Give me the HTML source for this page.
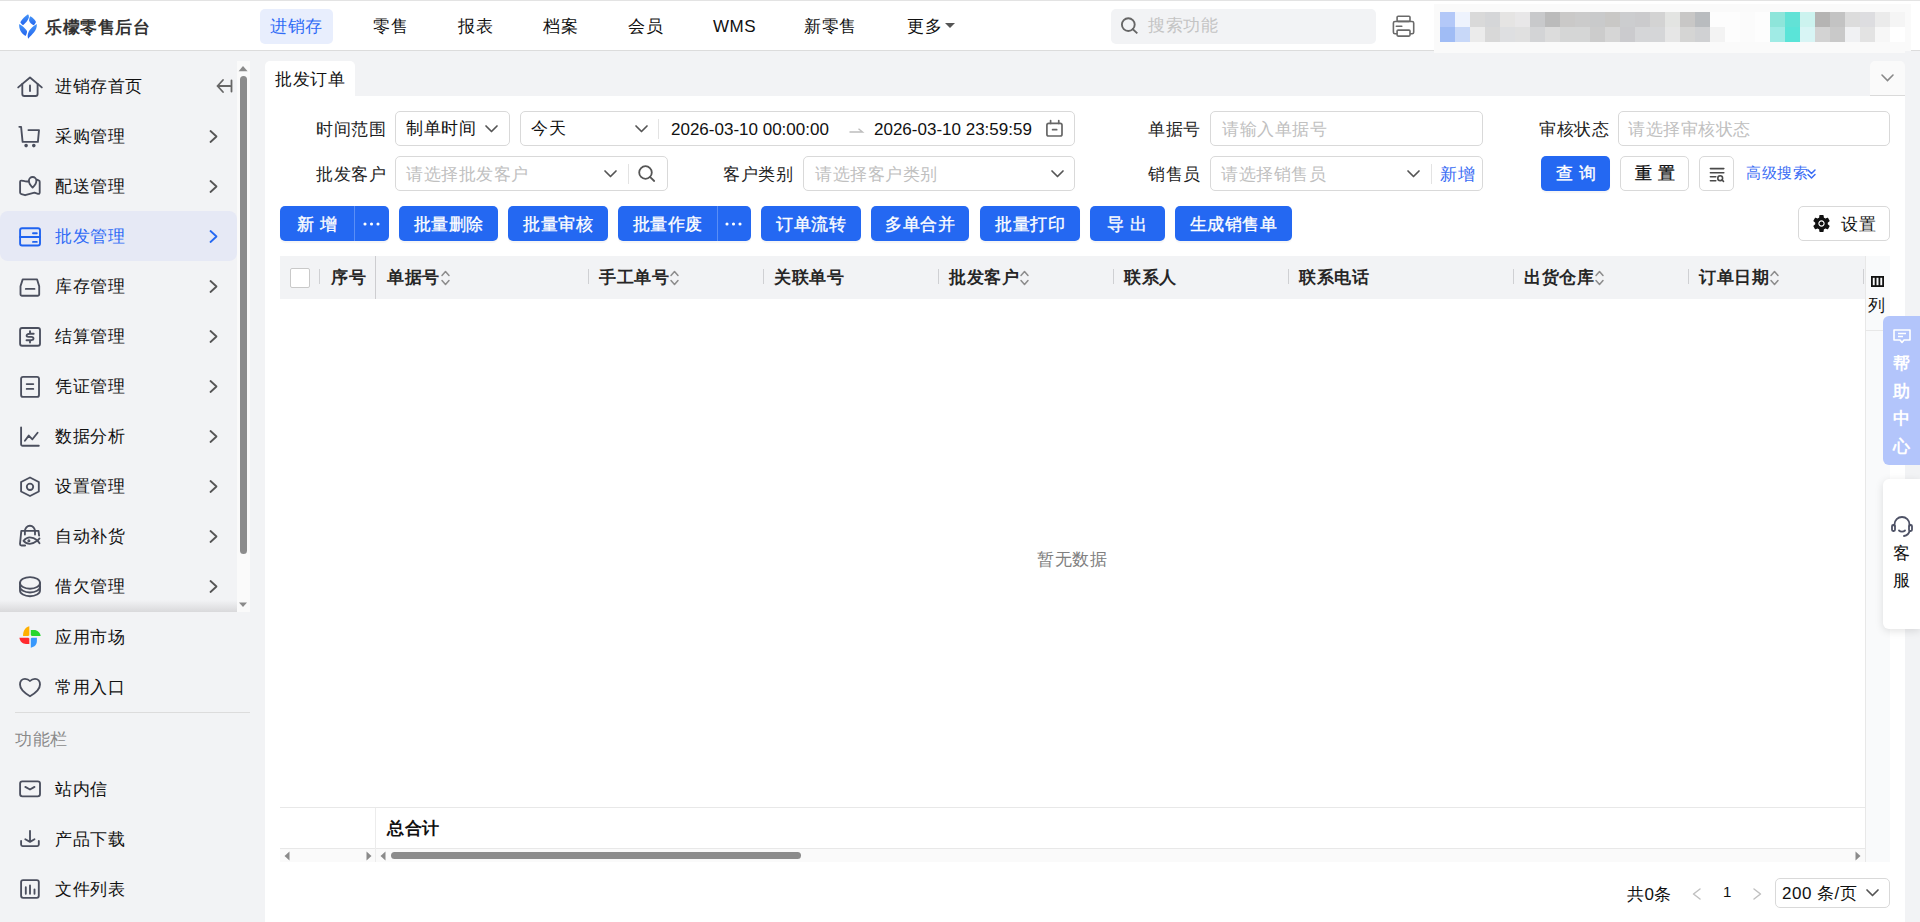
<!DOCTYPE html>
<html><head><meta charset="utf-8"><style>
*{box-sizing:border-box;margin:0;padding:0}
html,body{width:1920px;height:922px;overflow:hidden;background:#f2f3f5;font-family:"Liberation Sans",sans-serif;color:#1f1f1f}
.a{position:absolute}
.t{position:absolute;white-space:nowrap;font-size:17px;letter-spacing:0.5px;line-height:20px}
svg{position:absolute;overflow:visible}
.box{position:absolute;border:1px solid #d9d9d9;border-radius:5px;background:#fff}
.ph{color:#bfbfbf}
.btn{position:absolute;top:206px;height:35px;background:#2468f2;border-radius:5px;color:#fff;font-size:17.5px;line-height:35px;text-align:center;white-space:nowrap;box-shadow:0 2px 1px rgba(0,0,0,0.04)}
.th{font-weight:bold;color:#1f1f1f}
</style></head><body>
<div class="a" style="left:0px;top:0px;width:1920px;height:51px;background:#fff;border-top:1px solid #e3e3e3;border-bottom:1px solid #dcdcdc"></div>
<svg style="left:14px;top:10px;" width="28" height="32" viewBox="0 0 28 32"><defs><linearGradient id="lg" x1="0" y1="0" x2="0" y2="1"><stop offset="0" stop-color="#4595f8"/><stop offset="1" stop-color="#2364ee"/></linearGradient></defs><g fill="url(#lg)"><path d="M14 4.3 C11 6.5 7.5 9.5 6.3 12.3 C7 13.5 8 14.5 9 15.2 C11.5 13 14 10.5 14.8 7.8 C15 6.5 14.9 5 14 4.3 Z"/><path d="M16.3 6.2 C18.5 7.5 21 9.5 22 12 C21.3 13.5 20.5 14.5 19.5 15.3 C17.5 14 15.5 12.5 15.1 10.5 C15 9 15.5 7.2 16.3 6.2 Z"/><path d="M5.2 14 C4.8 18 6.5 23 11.5 26 C12.5 24.5 13.2 22.5 13 21 C11.5 18.5 8.5 16 5.2 14 Z"/><path d="M22.8 14 C23.3 21 18 24 14.2 28.7 C13.3 26.5 13.5 24 15 21 C16.5 18.5 19.5 16 22.8 14 Z"/></g></svg>
<div class="t" style="left:45px;top:17px;font-weight:900;color:#333;font-size:16.5px;letter-spacing:0.5px">乐檬零售后台</div>
<div class="a" style="left:260px;top:9px;width:73px;height:35px;border-radius:5px;background:#e8eefd"></div>
<div class="t" style="left:270px;top:17px;color:#2f6bf6">进销存</div>
<div class="t" style="left:373px;top:17px;color:#111">零售</div>
<div class="t" style="left:458px;top:17px;color:#111">报表</div>
<div class="t" style="left:543px;top:17px;color:#111">档案</div>
<div class="t" style="left:628px;top:17px;color:#111">会员</div>
<div class="t" style="left:713px;top:17px;color:#111">WMS</div>
<div class="t" style="left:804px;top:17px;color:#111">新零售</div>
<div class="t" style="left:907px;top:17px;color:#111">更多</div>
<svg style="left:945px;top:23px;" width="10" height="5" viewBox="0 0 10 5"><path d="M0 0 H10 L5 5Z" fill="#555"/></svg>
<div class="a" style="left:1111px;top:9px;width:265px;height:35px;border-radius:5px;background:#f2f3f5"></div>
<svg style="left:1121px;top:17px;" width="18" height="17" viewBox="0 0 18 17"><circle cx="7.3" cy="7.6" r="6.4" fill="none" stroke="#666" stroke-width="1.9"/><path d="M11.8 12.3 L15.6 15.7" stroke="#666" stroke-width="1.9" stroke-linecap="square"/></svg>
<div class="t" style="left:1148px;top:16px;color:#c4c4c4">搜索功能</div>
<svg style="left:1385px;top:8px;" width="40" height="36" viewBox="0 0 40 36"><g stroke="#6a6a6a" stroke-width="1.6" fill="none" stroke-linejoin="round"><rect x="12.1" y="8.2" width="12.9" height="5.2" rx="1"/><rect x="8.4" y="13.5" width="20.3" height="12.3" rx="1.6"/><rect x="12.1" y="22.1" width="12.9" height="6" rx="1" fill="#fff"/><path d="M11.3 18.2 H16.8" stroke-linecap="round"/></g></svg>
<div class="a" style="left:1434px;top:4px;width:477px;height:49px;background:#fafafa"></div>
<div class="a" style="left:1440px;top:12px;width:15px;height:15px;background:#b3c8f8"></div>
<div class="a" style="left:1440px;top:27px;width:15px;height:15px;background:#a0bcf5"></div>
<div class="a" style="left:1455px;top:12px;width:15px;height:15px;background:#eef3fd"></div>
<div class="a" style="left:1455px;top:27px;width:15px;height:15px;background:#c8d8f8"></div>
<div class="a" style="left:1470px;top:12px;width:15px;height:15px;background:#d9d9d9"></div>
<div class="a" style="left:1470px;top:27px;width:15px;height:15px;background:#ebebeb"></div>
<div class="a" style="left:1485px;top:12px;width:15px;height:15px;background:#d5d6d8"></div>
<div class="a" style="left:1485px;top:27px;width:15px;height:15px;background:#d8d8d8"></div>
<div class="a" style="left:1500px;top:12px;width:15px;height:15px;background:#e5e4e3"></div>
<div class="a" style="left:1500px;top:27px;width:15px;height:15px;background:#dedfe1"></div>
<div class="a" style="left:1515px;top:12px;width:15px;height:15px;background:#e8e7e8"></div>
<div class="a" style="left:1515px;top:27px;width:15px;height:15px;background:#e0e0e0"></div>
<div class="a" style="left:1530px;top:12px;width:15px;height:15px;background:#c8c9cb"></div>
<div class="a" style="left:1530px;top:27px;width:15px;height:15px;background:#d3d4d6"></div>
<div class="a" style="left:1545px;top:12px;width:15px;height:15px;background:#bbbbbb"></div>
<div class="a" style="left:1545px;top:27px;width:15px;height:15px;background:#dcdcdc"></div>
<div class="a" style="left:1560px;top:12px;width:15px;height:15px;background:#cac9c8"></div>
<div class="a" style="left:1560px;top:27px;width:15px;height:15px;background:#d5d6d6"></div>
<div class="a" style="left:1575px;top:12px;width:15px;height:15px;background:#cbcbcb"></div>
<div class="a" style="left:1575px;top:27px;width:15px;height:15px;background:#d5d6d6"></div>
<div class="a" style="left:1590px;top:12px;width:15px;height:15px;background:#c9cacb"></div>
<div class="a" style="left:1590px;top:27px;width:15px;height:15px;background:#cccccc"></div>
<div class="a" style="left:1605px;top:12px;width:15px;height:15px;background:#c9c8c6"></div>
<div class="a" style="left:1605px;top:27px;width:15px;height:15px;background:#d6d6d6"></div>
<div class="a" style="left:1620px;top:12px;width:15px;height:15px;background:#cccdcf"></div>
<div class="a" style="left:1620px;top:27px;width:15px;height:15px;background:#cbcbce"></div>
<div class="a" style="left:1635px;top:12px;width:15px;height:15px;background:#cbcbcd"></div>
<div class="a" style="left:1635px;top:27px;width:15px;height:15px;background:#d5d6d8"></div>
<div class="a" style="left:1650px;top:12px;width:15px;height:15px;background:#d3d3d3"></div>
<div class="a" style="left:1650px;top:27px;width:15px;height:15px;background:#d5d6d8"></div>
<div class="a" style="left:1665px;top:12px;width:15px;height:15px;background:#e3e4e2"></div>
<div class="a" style="left:1665px;top:27px;width:15px;height:15px;background:#e6e6e6"></div>
<div class="a" style="left:1680px;top:12px;width:15px;height:15px;background:#c8c7c6"></div>
<div class="a" style="left:1680px;top:27px;width:15px;height:15px;background:#d5d5d4"></div>
<div class="a" style="left:1695px;top:12px;width:15px;height:15px;background:#b9bcbf"></div>
<div class="a" style="left:1695px;top:27px;width:15px;height:15px;background:#d0d1d3"></div>
<div class="a" style="left:1710px;top:12px;width:15px;height:15px;background:#fdfdfd"></div>
<div class="a" style="left:1710px;top:27px;width:15px;height:15px;background:#f3f3f3"></div>
<div class="a" style="left:1725px;top:12px;width:15px;height:15px;background:#fdfdfd"></div>
<div class="a" style="left:1725px;top:27px;width:15px;height:15px;background:#fdfdfd"></div>
<div class="a" style="left:1740px;top:12px;width:15px;height:15px;background:#fbfbfb"></div>
<div class="a" style="left:1740px;top:27px;width:15px;height:15px;background:#fbfbfb"></div>
<div class="a" style="left:1755px;top:12px;width:15px;height:15px;background:#fdfdfd"></div>
<div class="a" style="left:1755px;top:27px;width:15px;height:15px;background:#fdfdfd"></div>
<div class="a" style="left:1770px;top:12px;width:15px;height:15px;background:#8ee5da"></div>
<div class="a" style="left:1770px;top:27px;width:15px;height:15px;background:#a0ebe5"></div>
<div class="a" style="left:1785px;top:12px;width:15px;height:15px;background:#62e2d6"></div>
<div class="a" style="left:1785px;top:27px;width:15px;height:15px;background:#5ae4d8"></div>
<div class="a" style="left:1800px;top:12px;width:15px;height:15px;background:#ccf3ef"></div>
<div class="a" style="left:1800px;top:27px;width:15px;height:15px;background:#d8f5f5"></div>
<div class="a" style="left:1815px;top:12px;width:15px;height:15px;background:#b5b4b3"></div>
<div class="a" style="left:1815px;top:27px;width:15px;height:15px;background:#d3d3d3"></div>
<div class="a" style="left:1830px;top:12px;width:15px;height:15px;background:#c3c3c3"></div>
<div class="a" style="left:1830px;top:27px;width:15px;height:15px;background:#c9c9c9"></div>
<div class="a" style="left:1845px;top:12px;width:15px;height:15px;background:#dcdcdc"></div>
<div class="a" style="left:1845px;top:27px;width:15px;height:15px;background:#f0f1f3"></div>
<div class="a" style="left:1860px;top:12px;width:15px;height:15px;background:#dddde0"></div>
<div class="a" style="left:1860px;top:27px;width:15px;height:15px;background:#e3e3e3"></div>
<div class="a" style="left:1875px;top:12px;width:15px;height:15px;background:#ebebeb"></div>
<div class="a" style="left:1875px;top:27px;width:15px;height:15px;background:#f7f7f7"></div>
<div class="a" style="left:1890px;top:12px;width:15px;height:15px;background:#f5f5f5"></div>
<div class="a" style="left:1890px;top:27px;width:15px;height:15px;background:#ffffff"></div>
<div class="a" style="left:0px;top:211px;width:237px;height:50px;border-radius:8px;background:#e6e9f5"></div>
<svg style="left:14px;top:70px;" width="32" height="32" viewBox="0 0 32 32"><g fill="none" stroke="#4b4f5e" stroke-width="1.85" stroke-linecap="round" stroke-linejoin="round"><path d="M4.2 17.4 L16 7.5 L27.8 17.4"/><path d="M8.3 13.8 V24 A2 2 0 0 0 10.3 26 H21.6 A2 2 0 0 0 23.6 24 V13.8"/><path d="M16 15.4 V21"/></g></svg>
<div class="t" style="left:55px;top:77px;color:#111">进销存首页</div>
<svg style="left:216px;top:79px;" width="17" height="14" viewBox="0 0 17 14"><g fill="none" stroke="#666" stroke-width="1.8" stroke-linecap="round" stroke-linejoin="round"><path d="M7 1 L1.5 7 L7 13 M1.5 7 H14 M15.5 1.5 V12.5"/></g></svg>
<svg style="left:14px;top:120px;" width="32" height="32" viewBox="0 0 32 32"><g fill="none" stroke="#4b4f5e" stroke-width="1.85" stroke-linecap="round" stroke-linejoin="round"><path d="M5.3 6.8 H7.1 L8.6 21.9 H23.9 L25 10.1 H14.4"/><circle cx="12.1" cy="25.6" r="0.9" fill="#4b4f5e"/><circle cx="19.8" cy="25.6" r="0.9" fill="#4b4f5e"/></g></svg>
<div class="t" style="left:55px;top:127px;color:#111">采购管理</div>
<svg style="left:209px;top:130px;" width="9" height="13" viewBox="0 0 9 13"><path d="M1.5 1 L7.5 6.5 L1.5 12" fill="none" stroke="#555" stroke-width="1.8" stroke-linecap="round" stroke-linejoin="round"/></svg>
<svg style="left:14px;top:170px;" width="32" height="32" viewBox="0 0 32 32"><g fill="none" stroke="#4b4f5e" stroke-width="1.85" stroke-linecap="round" stroke-linejoin="round"><path d="M14.6 11.3 C12.5 12 10 11 8 10.6 C7 10.4 6.1 11 6.1 12 V22.6 C6.1 23.4 6.6 24 7.4 24.2 L11.1 25.2 L20.5 22.7 L24 23.8 C25 24.1 25.7 23.5 25.7 22.6 V11.8 C25.7 11.1 25.3 10.6 24.6 10.4 L22.8 9.7"/><path d="M18.6 17.6 C16.5 15.5 14.9 13.5 14.9 10.7 A3.7 3.7 0 0 1 22.4 10.7 C22.4 13.5 20.7 15.5 18.6 17.6 Z"/></g></svg>
<div class="t" style="left:55px;top:177px;color:#111">配送管理</div>
<svg style="left:209px;top:180px;" width="9" height="13" viewBox="0 0 9 13"><path d="M1.5 1 L7.5 6.5 L1.5 12" fill="none" stroke="#555" stroke-width="1.8" stroke-linecap="round" stroke-linejoin="round"/></svg>
<svg style="left:14px;top:220px;" width="32" height="32" viewBox="0 0 32 32"><g fill="none" stroke="#1f63f0" stroke-width="1.9" stroke-linecap="round" stroke-linejoin="round"><rect x="6.1" y="8.2" width="19.9" height="17.3" rx="2"/><path d="M6.1 17 H26"/><path d="M19 13.2 H22.8 M19 21.9 H22.8"/></g></svg>
<div class="t" style="left:55px;top:227px;color:#2f6bf6">批发管理</div>
<svg style="left:209px;top:230px;" width="9" height="13" viewBox="0 0 9 13"><path d="M1.5 1 L7.5 6.5 L1.5 12" fill="none" stroke="#2468f2" stroke-width="1.8" stroke-linecap="round" stroke-linejoin="round"/></svg>
<svg style="left:14px;top:270px;" width="32" height="32" viewBox="0 0 32 32"><g fill="none" stroke="#4b4f5e" stroke-width="1.85" stroke-linecap="round" stroke-linejoin="round"><path d="M8.7 9.4 H23.1 L25.2 16.2 V24.2 A1.5 1.5 0 0 1 23.7 25.7 H8 A1.5 1.5 0 0 1 6.5 24.2 V16.2 Z"/><path d="M11.8 18.9 H20.5"/></g></svg>
<div class="t" style="left:55px;top:277px;color:#111">库存管理</div>
<svg style="left:209px;top:280px;" width="9" height="13" viewBox="0 0 9 13"><path d="M1.5 1 L7.5 6.5 L1.5 12" fill="none" stroke="#555" stroke-width="1.8" stroke-linecap="round" stroke-linejoin="round"/></svg>
<svg style="left:14px;top:320px;" width="32" height="32" viewBox="0 0 32 32"><g fill="none" stroke="#4b4f5e" stroke-width="1.85" stroke-linecap="round" stroke-linejoin="round"><rect x="6.1" y="8" width="19.9" height="17.7" rx="2"/><path d="M19.7 13.7 H16 C13.8 13.7 12.6 14.6 12.6 15.6 C12.6 16.5 13.4 16.9 14.5 16.9 H17.4 C18.7 16.9 19.5 17.6 19.5 18.6 C19.5 19.6 18.5 20.2 17 20.2 H12.5 M16 11.1 V13.5 M16 20.4 V22.6"/></g></svg>
<div class="t" style="left:55px;top:327px;color:#111">结算管理</div>
<svg style="left:209px;top:330px;" width="9" height="13" viewBox="0 0 9 13"><path d="M1.5 1 L7.5 6.5 L1.5 12" fill="none" stroke="#555" stroke-width="1.8" stroke-linecap="round" stroke-linejoin="round"/></svg>
<svg style="left:14px;top:370px;" width="32" height="32" viewBox="0 0 32 32"><g fill="none" stroke="#4b4f5e" stroke-width="1.85" stroke-linecap="round" stroke-linejoin="round"><rect x="7.1" y="6.8" width="17.9" height="20.1" rx="2"/><path d="M12.7 14.1 H19.3 M12.7 18.9 H19.3"/></g></svg>
<div class="t" style="left:55px;top:377px;color:#111">凭证管理</div>
<svg style="left:209px;top:380px;" width="9" height="13" viewBox="0 0 9 13"><path d="M1.5 1 L7.5 6.5 L1.5 12" fill="none" stroke="#555" stroke-width="1.8" stroke-linecap="round" stroke-linejoin="round"/></svg>
<svg style="left:14px;top:420px;" width="32" height="32" viewBox="0 0 32 32"><g fill="none" stroke="#4b4f5e" stroke-width="1.85" stroke-linecap="round" stroke-linejoin="round"><path d="M7.1 7.5 V24.2 A1.5 1.5 0 0 0 8.6 25.7 H24.8"/><path d="M10.9 20.8 L14.75 15.6 L18.4 19.3 L23.6 12.7"/></g></svg>
<div class="t" style="left:55px;top:427px;color:#111">数据分析</div>
<svg style="left:209px;top:430px;" width="9" height="13" viewBox="0 0 9 13"><path d="M1.5 1 L7.5 6.5 L1.5 12" fill="none" stroke="#555" stroke-width="1.8" stroke-linecap="round" stroke-linejoin="round"/></svg>
<svg style="left:14px;top:470px;" width="32" height="32" viewBox="0 0 32 32"><g fill="none" stroke="#4b4f5e" stroke-width="1.85" stroke-linecap="round" stroke-linejoin="round"><path d="M16 7.5 L24.8 12 V21.5 L16 26 L7.1 21.5 V12 Z"/><circle cx="16" cy="16.8" r="3.2"/></g></svg>
<div class="t" style="left:55px;top:477px;color:#111">设置管理</div>
<svg style="left:209px;top:480px;" width="9" height="13" viewBox="0 0 9 13"><path d="M1.5 1 L7.5 6.5 L1.5 12" fill="none" stroke="#555" stroke-width="1.8" stroke-linecap="round" stroke-linejoin="round"/></svg>
<svg style="left:14px;top:520px;" width="32" height="32" viewBox="0 0 32 32"><g fill="none" stroke="#4b4f5e" stroke-width="1.85" stroke-linecap="round" stroke-linejoin="round"><path d="M10.9 14.6 V11.5 A5.05 5.8 0 0 1 21 11.5 V14.6"/><path d="M11.1 25.5 H7.5 A1.5 1.5 0 0 1 6 24 L7.3 10.8 H24.5 L25.1 15.6"/><path d="M9.5 20.8 C11.5 18.5 13.5 17.4 15.8 17.4 C18.5 17.4 21 18.6 23.6 20.6 C21 22.6 18.5 23.8 15.8 23.8 C13.5 23.8 11.5 23 9.5 20.8 Z M23.6 20.6 L25.5 18.4 M23.6 20.6 L25.5 23.3"/><circle cx="14.9" cy="20.8" r="0.6" fill="#4b4f5e"/></g></svg>
<div class="t" style="left:55px;top:527px;color:#111">自动补货</div>
<svg style="left:209px;top:530px;" width="9" height="13" viewBox="0 0 9 13"><path d="M1.5 1 L7.5 6.5 L1.5 12" fill="none" stroke="#555" stroke-width="1.8" stroke-linecap="round" stroke-linejoin="round"/></svg>
<svg style="left:14px;top:570px;" width="32" height="32" viewBox="0 0 32 32"><g fill="none" stroke="#4b4f5e" stroke-width="1.85" stroke-linecap="round" stroke-linejoin="round"><ellipse cx="16" cy="12.9" rx="10" ry="5.8"/><path d="M6 13 V16.7 A10 5.8 0 0 0 26 16.7 V13"/><path d="M6 16.7 V20.4 A10 5.8 0 0 0 26 20.4 V16.7"/></g></svg>
<div class="t" style="left:55px;top:577px;color:#111">借欠管理</div>
<svg style="left:209px;top:580px;" width="9" height="13" viewBox="0 0 9 13"><path d="M1.5 1 L7.5 6.5 L1.5 12" fill="none" stroke="#555" stroke-width="1.8" stroke-linecap="round" stroke-linejoin="round"/></svg>
<div class="a" style="left:237px;top:61px;width:13px;height:551px;background:#fafafa"></div>
<svg style="left:238px;top:66px;" width="10" height="6" viewBox="0 0 10 6"><path d="M0.6 5.2 L5 0 L9.6 5.2Z" fill="#8a8a8a"/></svg>
<div class="a" style="left:240px;top:76px;width:7px;height:478px;border-radius:3.5px;background:#8c8c8c"></div>
<svg style="left:238px;top:602px;" width="10" height="6" viewBox="0 0 10 6"><path d="M1 0.5 L5 5 L9 0.5Z" fill="#8a8a8a"/></svg>
<div class="a" style="left:0px;top:600px;width:237px;height:12px;background:linear-gradient(#f2f3f5,#d9d9db)"></div>
<svg style="left:14px;top:621px;" width="32" height="32" viewBox="0 0 32 32"><path d="M15.3 5.2 V14.2 L14.3 15 H9 C9 10 11 6.3 15.3 5.2 Z" fill="#ffb000"/><path d="M16.8 9 H20 C23.5 9 26 11.5 26.7 14.9 H17.7 L16.8 14 Z" fill="#28d62f"/><path d="M5.4 16.7 H14.3 L15.3 17.6 V22.9 H12 C8.5 22.9 6 20.5 5.4 16.7 Z" fill="#ff2a2e"/><path d="M16.8 26.7 V17.6 L17.7 16.7 H22.9 V20 C22.9 23.5 20.5 26 16.8 26.7 Z" fill="#3898fc"/></svg>
<div class="t" style="left:55px;top:628px;color:#111">应用市场</div>
<svg style="left:14px;top:671px;" width="32" height="32" viewBox="0 0 32 32"><g fill="none" stroke="#4b4f5e" stroke-width="1.85" stroke-linecap="round" stroke-linejoin="round"><path d="M16 10 C14.5 8.3 12.8 7.8 11 7.8 C8 7.8 6 10.3 6 13.5 C6 18 10.5 22 16 25.2 C21.5 22 26 18 26 13.5 C26 10.3 24 7.8 21 7.8 C19.2 7.8 17.5 8.3 16 10 Z"/></g></svg>
<div class="t" style="left:55px;top:678px;color:#111">常用入口</div>
<div class="a" style="left:15px;top:712px;width:235px;height:1px;background:#dcdcdc"></div>
<div class="t" style="left:15px;top:730px;color:#8a8a8a">功能栏</div>
<svg style="left:14px;top:773px;" width="32" height="32" viewBox="0 0 32 32"><g fill="none" stroke="#4b4f5e" stroke-width="1.85" stroke-linecap="round" stroke-linejoin="round"><rect x="6.1" y="8.3" width="19.9" height="15" rx="2.3"/><path d="M11.3 13.9 L16 16.5 L20.5 13.9"/></g></svg>
<div class="t" style="left:55px;top:780px;color:#111">站内信</div>
<svg style="left:14px;top:823px;" width="32" height="32" viewBox="0 0 32 32"><g fill="none" stroke="#4b4f5e" stroke-width="1.85" stroke-linecap="round" stroke-linejoin="round"><path d="M16 7.8 V18.9 M11.3 16.3 L16 18.9 L20.5 16.3"/><path d="M7.1 18 V21.6 A1.5 1.5 0 0 0 8.6 23.1 H23.3 A1.5 1.5 0 0 0 24.8 21.6 V18"/></g></svg>
<div class="t" style="left:55px;top:830px;color:#111">产品下载</div>
<svg style="left:14px;top:873px;" width="32" height="32" viewBox="0 0 32 32"><g fill="none" stroke="#4b4f5e" stroke-width="1.85" stroke-linecap="round" stroke-linejoin="round"><rect x="7.1" y="7.1" width="17.7" height="17.7" rx="2"/><path d="M11.8 14.2 V20.8 M16 12.5 V20.8 M20.5 16.3 V20.8"/></g></svg>
<div class="t" style="left:55px;top:880px;color:#111">文件列表</div>
<div class="a" style="left:265px;top:61px;width:90px;height:40px;border-radius:5px 5px 0 0;background:#fff"></div>
<div class="t" style="left:275px;top:70px;color:#111">批发订单</div>
<div class="a" style="left:1870px;top:61px;width:35px;height:35px;border-radius:5px 5px 0 0;background:#fafafa;border-bottom:1px solid #dadada"></div>
<svg style="left:1881px;top:74px;" width="13" height="8" viewBox="0 0 13 8"><path d="M1 1 L6.5 6.5 L12 1" fill="none" stroke="#888" stroke-width="1.6" stroke-linecap="round"/></svg>
<div class="a" style="left:265px;top:96px;width:1640px;height:826px;background:#fff"></div>
<div class="t" style="left:316px;top:120px;color:#222">时间范围</div>
<div class="a" style="left:395px;top:111px;width:115px;height:35px;border:1px solid #d9d9d9;border-radius:5px;background:#fff;"></div>
<div class="t" style="left:406px;top:119px;color:#111">制单时间</div>
<svg style="left:485px;top:125px;" width="13" height="8" viewBox="0 0 13 8"><path d="M1 1 L6.5 6.5 L12 1" fill="none" stroke="#555" stroke-width="1.7" stroke-linecap="round" stroke-linejoin="round"/></svg>
<div class="a" style="left:520px;top:111px;width:555px;height:35px;border:1px solid #d9d9d9;border-radius:5px;background:#fff;"></div>
<div class="t" style="left:531px;top:119px;color:#111">今天</div>
<svg style="left:635px;top:125px;" width="13" height="8" viewBox="0 0 13 8"><path d="M1 1 L6.5 6.5 L12 1" fill="none" stroke="#555" stroke-width="1.7" stroke-linecap="round" stroke-linejoin="round"/></svg>
<div class="a" style="left:658px;top:119px;width:1px;height:20px;background:#e3e3e3"></div>
<div class="t" style="left:671px;top:120px;color:#111;font-size:17px;letter-spacing:0">2026-03-10 00:00:00</div>
<svg style="left:849px;top:128px;" width="14" height="5" viewBox="0 0 14 5"><path d="M0.5 4 H13.5 L9.5 0.8" fill="none" stroke="#bdbdbd" stroke-width="1.4"/></svg>
<div class="t" style="left:874px;top:120px;color:#111;font-size:17px;letter-spacing:0">2026-03-10 23:59:59</div>
<svg style="left:1040px;top:112px;" width="30" height="32" viewBox="0 0 30 32"><g fill="none" stroke="#666" stroke-width="1.7" stroke-linejoin="round" stroke-linecap="round"><rect x="6.9" y="11.4" width="15.1" height="12.6" rx="1.8"/><path d="M10.6 8.6 V11.4 M18.75 8.6 V11.4"/><path d="M12.6 17.7 H16.7"/></g></svg>
<div class="t" style="left:1148px;top:120px;color:#222">单据号</div>
<div class="a" style="left:1210px;top:111px;width:273px;height:35px;border:1px solid #d9d9d9;border-radius:5px;background:#fff;"></div>
<div class="t" style="left:1222px;top:120px;color:#c0c0c0">请输入单据号</div>
<div class="t" style="left:1539px;top:120px;color:#222">审核状态</div>
<div class="a" style="left:1618px;top:111px;width:272px;height:35px;border:1px solid #d9d9d9;border-radius:5px;background:#fff;"></div>
<div class="t" style="left:1628px;top:120px;color:#c0c0c0">请选择审核状态</div>
<div class="t" style="left:316px;top:165px;color:#222">批发客户</div>
<div class="a" style="left:395px;top:156px;width:273px;height:35px;border:1px solid #d9d9d9;border-radius:5px;background:#fff;"></div>
<div class="t" style="left:406px;top:165px;color:#c0c0c0">请选择批发客户</div>
<svg style="left:604px;top:170px;" width="13" height="8" viewBox="0 0 13 8"><path d="M1 1 L6.5 6.5 L12 1" fill="none" stroke="#555" stroke-width="1.7" stroke-linecap="round" stroke-linejoin="round"/></svg>
<div class="a" style="left:628px;top:164px;width:1px;height:20px;background:#e3e3e3"></div>
<svg style="left:638px;top:165px;" width="18" height="17" viewBox="0 0 18 17"><circle cx="7.5" cy="7.5" r="6.3" fill="none" stroke="#555" stroke-width="1.8"/><path d="M12.2 12.2 L16.2 16" stroke="#555" stroke-width="1.8" stroke-linecap="round"/></svg>
<div class="t" style="left:723px;top:165px;color:#222">客户类别</div>
<div class="a" style="left:803px;top:156px;width:272px;height:35px;border:1px solid #d9d9d9;border-radius:5px;background:#fff;"></div>
<div class="t" style="left:815px;top:165px;color:#c0c0c0">请选择客户类别</div>
<svg style="left:1051px;top:170px;" width="13" height="8" viewBox="0 0 13 8"><path d="M1 1 L6.5 6.5 L12 1" fill="none" stroke="#555" stroke-width="1.7" stroke-linecap="round" stroke-linejoin="round"/></svg>
<div class="t" style="left:1148px;top:165px;color:#222">销售员</div>
<div class="a" style="left:1210px;top:156px;width:273px;height:35px;border:1px solid #d9d9d9;border-radius:5px;background:#fff;"></div>
<div class="t" style="left:1221px;top:165px;color:#c0c0c0">请选择销售员</div>
<svg style="left:1407px;top:170px;" width="13" height="8" viewBox="0 0 13 8"><path d="M1 1 L6.5 6.5 L12 1" fill="none" stroke="#555" stroke-width="1.7" stroke-linecap="round" stroke-linejoin="round"/></svg>
<div class="a" style="left:1431px;top:164px;width:1px;height:20px;background:#e3e3e3"></div>
<div class="t" style="left:1440px;top:165px;color:#3a6cf4">新增</div>
<div class="a" style="left:1541px;top:156px;width:69px;height:35px;background:#2468f2;border-radius:5px;box-shadow:0 2px 1px rgba(0,0,0,0.04)"></div>
<div class="t" style="left:1556px;top:164px;color:#fff;-webkit-text-stroke:0.35px #fff">查 询</div>
<div class="a" style="left:1620px;top:156px;width:69px;height:35px;border:1px solid #d9d9d9;border-radius:5px;background:#fff;"></div>
<div class="t" style="left:1635px;top:164px;color:#111;-webkit-text-stroke:0.35px #111">重 置</div>
<div class="a" style="left:1699px;top:156px;width:35px;height:35px;border:1px solid #d9d9d9;border-radius:5px;background:#fff;"></div>
<svg style="left:1700px;top:160px;" width="40" height="30" viewBox="0 0 40 30"><g fill="none" stroke="#4a4a4a" stroke-width="1.6" stroke-linecap="round"><path d="M10.4 8.6 H23.8 M10.4 12.7 H23.8 M10.4 16.8 H15.8 M10.4 20.7 H15.8"/><circle cx="20.2" cy="18.2" r="2.4"/><path d="M22 20 L23.5 21.4"/></g></svg>
<div class="t" style="left:1746px;top:163px;color:#3a6cf4;font-size:15px">高级搜索</div>
<svg style="left:1807px;top:169px;" width="9" height="10" viewBox="0 0 9 10"><path d="M1 1 L4.5 4.5 L8 1 M1 5.5 L4.5 9 L8 5.5" fill="none" stroke="#3a6cf4" stroke-width="1.5" stroke-linecap="round" stroke-linejoin="round"/></svg>
<div class="a" style="left:280px;top:206px;width:109px;height:35px;background:#2468f2;border-radius:5px;box-shadow:0 2px 1px rgba(0,0,0,0.04)"></div>
<div class="t" style="left:280px;top:215px;width:74px;text-align:center;color:#fff;-webkit-text-stroke:0.35px #fff">新 增</div>
<div class="a" style="left:354px;top:206px;width:1px;height:35px;background:#5a8ef6"></div>
<svg style="left:363px;top:222px;" width="17" height="4" viewBox="0 0 17 4"><circle cx="2" cy="2" r="1.55" fill="#fff"/><circle cx="8.5" cy="2" r="1.55" fill="#fff"/><circle cx="15" cy="2" r="1.55" fill="#fff"/></svg>
<div class="a" style="left:399px;top:206px;width:99px;height:35px;background:#2468f2;border-radius:5px;box-shadow:0 2px 1px rgba(0,0,0,0.04)"></div>
<div class="t" style="left:399px;top:215px;width:99px;text-align:center;color:#fff;-webkit-text-stroke:0.35px #fff">批量删除</div>
<div class="a" style="left:508px;top:206px;width:100px;height:35px;background:#2468f2;border-radius:5px;box-shadow:0 2px 1px rgba(0,0,0,0.04)"></div>
<div class="t" style="left:508px;top:215px;width:100px;text-align:center;color:#fff;-webkit-text-stroke:0.35px #fff">批量审核</div>
<div class="a" style="left:618px;top:206px;width:133px;height:35px;background:#2468f2;border-radius:5px;box-shadow:0 2px 1px rgba(0,0,0,0.04)"></div>
<div class="t" style="left:618px;top:215px;width:99px;text-align:center;color:#fff;-webkit-text-stroke:0.35px #fff">批量作废</div>
<div class="a" style="left:717px;top:206px;width:1px;height:35px;background:#5a8ef6"></div>
<svg style="left:725px;top:222px;" width="17" height="4" viewBox="0 0 17 4"><circle cx="2" cy="2" r="1.55" fill="#fff"/><circle cx="8.5" cy="2" r="1.55" fill="#fff"/><circle cx="15" cy="2" r="1.55" fill="#fff"/></svg>
<div class="a" style="left:761px;top:206px;width:100px;height:35px;background:#2468f2;border-radius:5px;box-shadow:0 2px 1px rgba(0,0,0,0.04)"></div>
<div class="t" style="left:761px;top:215px;width:100px;text-align:center;color:#fff;-webkit-text-stroke:0.35px #fff">订单流转</div>
<div class="a" style="left:871px;top:206px;width:98px;height:35px;background:#2468f2;border-radius:5px;box-shadow:0 2px 1px rgba(0,0,0,0.04)"></div>
<div class="t" style="left:871px;top:215px;width:98px;text-align:center;color:#fff;-webkit-text-stroke:0.35px #fff">多单合并</div>
<div class="a" style="left:980px;top:206px;width:100px;height:35px;background:#2468f2;border-radius:5px;box-shadow:0 2px 1px rgba(0,0,0,0.04)"></div>
<div class="t" style="left:980px;top:215px;width:100px;text-align:center;color:#fff;-webkit-text-stroke:0.35px #fff">批量打印</div>
<div class="a" style="left:1090px;top:206px;width:75px;height:35px;background:#2468f2;border-radius:5px;box-shadow:0 2px 1px rgba(0,0,0,0.04)"></div>
<div class="t" style="left:1090px;top:215px;width:75px;text-align:center;color:#fff;-webkit-text-stroke:0.35px #fff">导 出</div>
<div class="a" style="left:1175px;top:206px;width:117px;height:35px;background:#2468f2;border-radius:5px;box-shadow:0 2px 1px rgba(0,0,0,0.04)"></div>
<div class="t" style="left:1175px;top:215px;width:117px;text-align:center;color:#fff;-webkit-text-stroke:0.35px #fff">生成销售单</div>
<div class="a" style="left:1798px;top:206px;width:92px;height:35px;border:1px solid #d9d9d9;border-radius:5px;background:#fff;"></div>
<svg style="left:1811px;top:213px;" width="21" height="21" viewBox="0 0 24 24"><path fill="#111" d="M19.14 12.94c.04-.3.06-.61.06-.94 0-.32-.02-.64-.07-.94l2.03-1.58a.49.49 0 0 0 .12-.61l-1.92-3.32a.488.488 0 0 0-.59-.22l-2.39.96c-.5-.38-1.03-.7-1.62-.94l-.36-2.54a.484.484 0 0 0-.48-.41h-3.84c-.24 0-.43.17-.47.41l-.36 2.54c-.59.24-1.13.57-1.62.94l-2.39-.96c-.22-.08-.47 0-.59.22L2.74 8.87c-.12.21-.08.47.12.61l2.03 1.58c-.05.3-.09.63-.09.94s.02.64.07.94l-2.03 1.58a.49.49 0 0 0-.12.61l1.92 3.32c.12.22.37.29.59.22l2.39-.96c.5.38 1.03.7 1.62.94l.36 2.54c.05.24.24.41.48.41h3.84c.24 0 .44-.17.47-.41l.36-2.54c.59-.24 1.13-.56 1.62-.94l2.39.96c.22.08.47 0 .59-.22l1.92-3.32c.12-.22.07-.47-.12-.61l-2.01-1.58zM12 15.6c-1.98 0-3.6-1.62-3.6-3.6s1.62-3.6 3.6-3.6 3.6 1.62 3.6 3.6-1.62 3.6-3.6 3.6z"/><circle cx="12" cy="12" r="2.3" fill="#111"/></svg>
<div class="t" style="left:1841px;top:215px;color:#111">设置</div>
<div class="a" style="left:280px;top:256px;width:1585px;height:43px;background:#f2f3f5"></div>
<div class="a" style="left:290px;top:268px;width:20px;height:20px;border:1px solid #c9c9c9;border-radius:2px;background:#fff"></div>
<div class="a" style="left:319px;top:269px;width:1px;height:15px;background:#cfd0d3"></div>
<div class="t" style="left:331px;top:268px;font-weight:bold;color:#262626;font-size:17px">序号</div>
<div class="a" style="left:375px;top:256px;width:1px;height:43px;background:#cdcdd0"></div>
<div class="t" style="left:387px;top:268px;font-weight:bold;color:#262626;font-size:17px">单据号</div>
<svg style="left:441px;top:270px;" width="9" height="16" viewBox="0 0 9 16"><path d="M1 5.5 L4.5 1.5 L8 5.5 M1 10.5 L4.5 14.5 L8 10.5" fill="none" stroke="#8c8c8c" stroke-width="1.5" stroke-linecap="round" stroke-linejoin="round"/></svg>
<div class="a" style="left:588px;top:269px;width:1px;height:15px;background:#cfd0d3"></div>
<div class="t" style="left:599px;top:268px;font-weight:bold;color:#262626;font-size:17px">手工单号</div>
<svg style="left:670px;top:270px;" width="9" height="16" viewBox="0 0 9 16"><path d="M1 5.5 L4.5 1.5 L8 5.5 M1 10.5 L4.5 14.5 L8 10.5" fill="none" stroke="#8c8c8c" stroke-width="1.5" stroke-linecap="round" stroke-linejoin="round"/></svg>
<div class="a" style="left:763px;top:269px;width:1px;height:15px;background:#cfd0d3"></div>
<div class="t" style="left:774px;top:268px;font-weight:bold;color:#262626;font-size:17px">关联单号</div>
<div class="a" style="left:938px;top:269px;width:1px;height:15px;background:#cfd0d3"></div>
<div class="t" style="left:949px;top:268px;font-weight:bold;color:#262626;font-size:17px">批发客户</div>
<svg style="left:1020px;top:270px;" width="9" height="16" viewBox="0 0 9 16"><path d="M1 5.5 L4.5 1.5 L8 5.5 M1 10.5 L4.5 14.5 L8 10.5" fill="none" stroke="#8c8c8c" stroke-width="1.5" stroke-linecap="round" stroke-linejoin="round"/></svg>
<div class="a" style="left:1113px;top:269px;width:1px;height:15px;background:#cfd0d3"></div>
<div class="t" style="left:1124px;top:268px;font-weight:bold;color:#262626;font-size:17px">联系人</div>
<div class="a" style="left:1288px;top:269px;width:1px;height:15px;background:#cfd0d3"></div>
<div class="t" style="left:1299px;top:268px;font-weight:bold;color:#262626;font-size:17px">联系电话</div>
<div class="a" style="left:1513px;top:269px;width:1px;height:15px;background:#cfd0d3"></div>
<div class="t" style="left:1524px;top:268px;font-weight:bold;color:#262626;font-size:17px">出货仓库</div>
<svg style="left:1595px;top:270px;" width="9" height="16" viewBox="0 0 9 16"><path d="M1 5.5 L4.5 1.5 L8 5.5 M1 10.5 L4.5 14.5 L8 10.5" fill="none" stroke="#8c8c8c" stroke-width="1.5" stroke-linecap="round" stroke-linejoin="round"/></svg>
<div class="a" style="left:1688px;top:269px;width:1px;height:15px;background:#cfd0d3"></div>
<div class="t" style="left:1699px;top:268px;font-weight:bold;color:#262626;font-size:17px">订单日期</div>
<svg style="left:1770px;top:270px;" width="9" height="16" viewBox="0 0 9 16"><path d="M1 5.5 L4.5 1.5 L8 5.5 M1 10.5 L4.5 14.5 L8 10.5" fill="none" stroke="#8c8c8c" stroke-width="1.5" stroke-linecap="round" stroke-linejoin="round"/></svg>
<div class="a" style="left:1863px;top:269px;width:1px;height:15px;background:#cfd0d3"></div>
<div class="a" style="left:1865px;top:256px;width:25px;height:606px;background:#f9fafb;border-left:1px solid #e8e8e8"></div>
<div class="a" style="left:1865px;top:330px;width:25px;height:1px;background:#e8e8e8"></div>
<svg style="left:1871px;top:276px;" width="13" height="11" viewBox="0 0 13 11"><g fill="none" stroke="#111" stroke-width="1.8"><rect x="0.9" y="0.9" width="11.2" height="9.2"/><path d="M4.6 1 V10 M8.4 1 V10"/></g></svg>
<div class="t" style="left:1868px;top:296px;color:#111">列</div>
<div class="t" style="left:1037px;top:550px;color:#808080">暂无数据</div>
<div class="a" style="left:280px;top:807px;width:1585px;height:1px;background:#e8e8e8"></div>
<div class="a" style="left:375px;top:808px;width:1px;height:53px;background:#ececec"></div>
<div class="t" style="left:387px;top:819px;font-weight:bold;color:#111">总合计</div>
<div class="a" style="left:280px;top:848px;width:1585px;height:1px;background:#e8e8e8"></div>
<div class="a" style="left:280px;top:849px;width:1585px;height:13px;background:#fafafa"></div>
<svg style="left:284px;top:851px;" width="6" height="10" viewBox="0 0 6 10"><path d="M5.5 0.5 V9.5 L0.5 5Z" fill="#8a8a8a"/></svg>
<svg style="left:366px;top:851px;" width="6" height="10" viewBox="0 0 6 10"><path d="M0.5 0.5 V9.5 L5.5 5Z" fill="#8a8a8a"/></svg>
<div class="a" style="left:375px;top:848px;width:1px;height:14px;background:#ececec"></div>
<svg style="left:380px;top:851px;" width="6" height="10" viewBox="0 0 6 10"><path d="M5.5 0.5 V9.5 L0.5 5Z" fill="#8a8a8a"/></svg>
<div class="a" style="left:391px;top:852px;width:410px;height:7px;border-radius:3.5px;background:#8c8c8c"></div>
<svg style="left:1855px;top:851px;" width="6" height="10" viewBox="0 0 6 10"><path d="M0.5 0.5 V9.5 L5.5 5Z" fill="#8a8a8a"/></svg>
<div class="t" style="left:1627px;top:885px;color:#111">共0条</div>
<svg style="left:1692px;top:888px;" width="9" height="12" viewBox="0 0 9 12"><path d="M8 1 L1.5 6 L8 11" fill="none" stroke="#c0c0c0" stroke-width="1.5" stroke-linecap="round" stroke-linejoin="round"/></svg>
<div class="t" style="left:1723px;top:882px;color:#111;font-size:15px">1</div>
<svg style="left:1753px;top:888px;" width="9" height="12" viewBox="0 0 9 12"><path d="M1 1 L7.5 6 L1 11" fill="none" stroke="#c0c0c0" stroke-width="1.5" stroke-linecap="round" stroke-linejoin="round"/></svg>
<div class="a" style="left:1775px;top:878px;width:115px;height:30px;border:1px solid #d9d9d9;border-radius:5px;background:#fff;"></div>
<div class="t" style="left:1782px;top:884px;color:#111">200 条/页</div>
<svg style="left:1866px;top:889px;" width="13" height="8" viewBox="0 0 13 8"><path d="M1 1 L6.5 6.5 L12 1" fill="none" stroke="#555" stroke-width="1.7" stroke-linecap="round" stroke-linejoin="round"/></svg>
<div class="a" style="left:1905px;top:51px;width:15px;height:871px;background:#f2f3f5"></div>
<div class="a" style="left:1883px;top:316px;width:37px;height:149px;background:#b3c5fb;border-radius:6px 0 0 6px"></div>
<svg style="left:1893px;top:329px;" width="18" height="15" viewBox="0 0 18 15"><g fill="none" stroke="#fff" stroke-width="1.6" stroke-linejoin="round"><path d="M1 1 H17 V11 H11 L9 13.5 L7 11 H1 Z"/><path d="M5 4.5 H13 M5 7.5 H10"/></g></svg>
<div class="t" style="left:1893px;top:354.0px;color:#fff;font-size:17px;font-weight:bold">帮</div>
<div class="t" style="left:1893px;top:381.5px;color:#fff;font-size:17px;font-weight:bold">助</div>
<div class="t" style="left:1893px;top:409.0px;color:#fff;font-size:17px;font-weight:bold">中</div>
<div class="t" style="left:1893px;top:436.5px;color:#fff;font-size:17px;font-weight:bold">心</div>
<div class="a" style="left:1883px;top:479px;width:37px;height:150px;background:#fff;border-radius:6px 0 0 6px;box-shadow:0 2px 8px rgba(0,0,0,0.12)"></div>
<svg style="left:1891px;top:516px;" width="22" height="21" viewBox="0 0 22 21"><g fill="none" stroke="#4e5266" stroke-width="1.8" stroke-linecap="round"><path d="M3.5 10 V8.5 A7.5 7.5 0 0 1 18.5 8.5 V10"/><rect x="1" y="9" width="3" height="6" rx="1.2"/><rect x="18" y="9" width="3" height="6" rx="1.2"/><path d="M8 14.5 C9.5 16 12.5 16 14 14.5"/><path d="M18.5 15 C18 18 16 19.5 13 20"/></g></svg>
<div class="t" style="left:1893px;top:544px;color:#111">客</div>
<div class="t" style="left:1893px;top:571px;color:#111">服</div>
</body></html>
